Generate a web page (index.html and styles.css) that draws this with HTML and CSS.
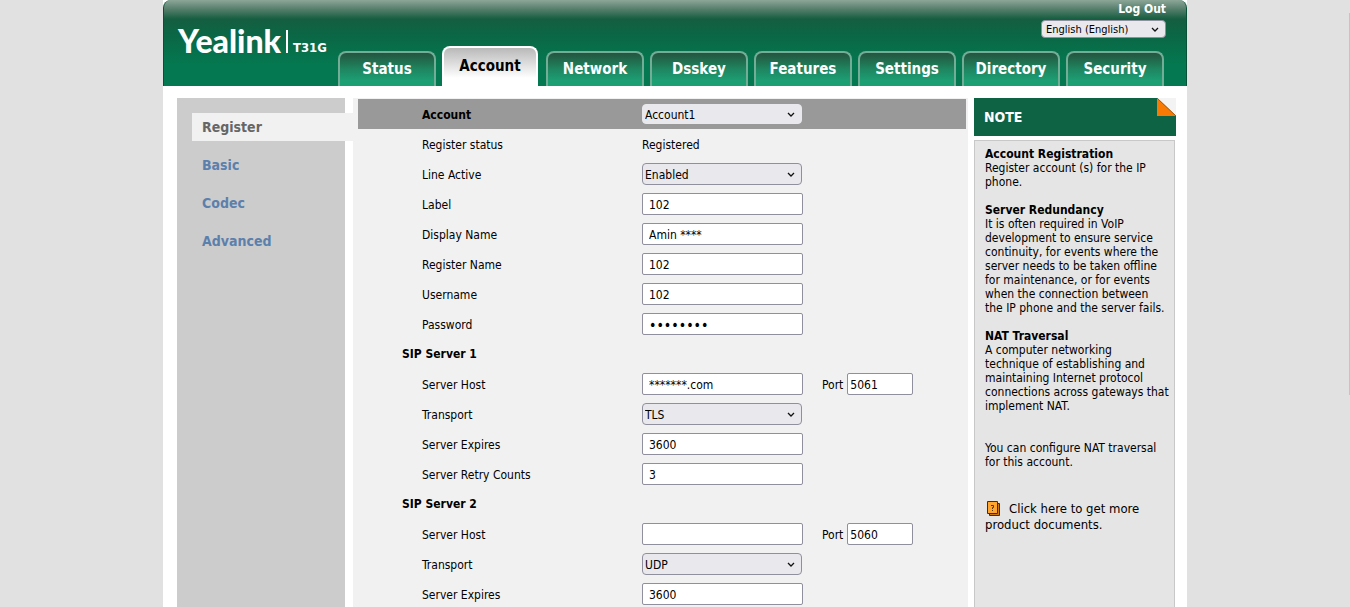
FILE: index.html
```html
<!DOCTYPE html>
<html lang="en">
<head>
<meta charset="utf-8">
<title>Yealink T31G - Account</title>
<link rel="stylesheet" href="styles.css">
</head>
<body>
<div class="page">
  <header class="header">
    <div class="brand"><span class="logo">Yealink</span><span class="model">T31G</span></div>
    <div class="header-right">
      <div class="tools">
        <a class="logout" href="#">Log Out</a>
        <span class="picker"><select class="language" aria-label="Language"><option>English (English)</option></select><svg class="arrow" viewBox="0 0 8 5"><path d="M1 1l3 3 3-3"/></svg></span>
      </div>
      <nav class="tabs" aria-label="Main">
        <a class="tab" href="#">Status</a>
        <a class="tab tab-active" href="#">Account</a>
        <a class="tab" href="#">Network</a>
        <a class="tab" href="#">Dsskey</a>
        <a class="tab" href="#">Features</a>
        <a class="tab" href="#">Settings</a>
        <a class="tab" href="#">Directory</a>
        <a class="tab" href="#">Security</a>
      </nav>
    </div>
  </header>
  <div class="content">
    <nav class="side" aria-label="Account">
      <a class="side-link side-active" href="#">Register</a>
      <a class="side-link" href="#">Basic</a>
      <a class="side-link" href="#">Codec</a>
      <a class="side-link" href="#">Advanced</a>
    </nav>
    <main class="main">
      <form class="form">
        <div class="row row-title"><label for="account">Account</label><span class="picker"><select class="select select-plain" id="account"><option>Account1</option></select><svg class="arrow" viewBox="0 0 8 5"><path d="M1 1l3 3 3-3"/></svg></span></div>
        <div class="row"><span class="text">Register status</span><span class="text">Registered</span></div>
        <div class="row"><label for="active">Line Active</label><span class="picker"><select class="select" id="active"><option>Enabled</option></select><svg class="arrow" viewBox="0 0 8 5"><path d="M1 1l3 3 3-3"/></svg></span></div>
        <div class="row"><label for="label">Label</label><input class="field" id="label" type="text" value="102"></div>
        <div class="row"><label for="display">Display Name</label><input class="field" id="display" type="text" value="Amin ****"></div>
        <div class="row"><label for="regname">Register Name</label><input class="field" id="regname" type="text" value="102"></div>
        <div class="row"><label for="user">Username</label><input class="field" id="user" type="text" value="102"></div>
        <div class="row"><label for="pass">Password</label><input class="field field-password" id="pass" type="password" value="password"></div>
        <h2 class="section">SIP Server 1</h2>
        <div class="row"><label for="host1">Server Host</label><input class="field" id="host1" type="text" value="*******.com"><span class="port"><label for="port1">Port</label><input class="field field-port" id="port1" type="text" value="5061"></span></div>
        <div class="row"><label for="transport1">Transport</label><span class="picker"><select class="select" id="transport1"><option>TLS</option></select><svg class="arrow" viewBox="0 0 8 5"><path d="M1 1l3 3 3-3"/></svg></span></div>
        <div class="row"><label for="expires1">Server Expires</label><input class="field" id="expires1" type="text" value="3600"></div>
        <div class="row"><label for="retry1">Server Retry Counts</label><input class="field" id="retry1" type="text" value="3"></div>
        <h2 class="section">SIP Server 2</h2>
        <div class="row"><label for="host2">Server Host</label><input class="field" id="host2" type="text" value=""><span class="port"><label for="port2">Port</label><input class="field field-port" id="port2" type="text" value="5060"></span></div>
        <div class="row"><label for="transport2">Transport</label><span class="picker"><select class="select" id="transport2"><option>UDP</option></select><svg class="arrow" viewBox="0 0 8 5"><path d="M1 1l3 3 3-3"/></svg></span></div>
        <div class="row"><label for="expires2">Server Expires</label><input class="field" id="expires2" type="text" value="3600"></div>
      </form>
    </main>
    <aside class="note">
      <h2 class="note-title">NOTE<svg class="fold" viewBox="0 0 19 18"><path fill="#f3f3f3" d="M0 0h19v18z"/><path fill="#f87a04" d="M0 0v18h19z"/><path stroke="#a85a10" d="M0 0l19 18"/></svg></h2>
      <div class="note-body">
        <h3>Account Registration</h3>
        <p>Register account (s) for the IP phone.</p>
        <h3>Server Redundancy</h3>
        <p>It is often required in VoIP development to ensure service continuity, for events where the server needs to be taken offline for maintenance, or for events when the connection between<br>the IP phone and the server fails.</p>
        <h3>NAT Traversal</h3>
        <p>A computer networking<br>technique of establishing and maintaining Internet protocol connections across gateways that implement NAT.</p>
        <p class="extra">You can configure NAT traversal for this account.</p>
        <a class="docs" href="#"><svg class="book" viewBox="0 0 14 15"><path fill="#c87818" stroke="#4a2c08" d="M2.500 2.500h10v12h-10z"/><path fill="#ffa530" stroke="#4a2c08" d="M.5.5h10v12H.5z"/><path fill="none" stroke="#5a3508" d="M4 4.500h2.500v2H5.500v1.500M5.500 9v1"/></svg>Click here to get more product documents.</a>
      </div>
    </aside>
  </div>
</div>
</body>
</html>
```
FILE: styles.css
```css
* { box-sizing: border-box; }
body {
  margin: 0;
  background: #e1e1e1;
  color: #000;
  font: 12px/14px "DejaVu Sans Condensed", "Noto Sans", sans-serif;
}
/* slim scroll indicator at the window's edge */
body::after {
  content: "";
  position: fixed;
  top: 13px;
  right: 0;
  width: 1px;
  height: 63vh;
  background: #c4c4c4;
}
a { color: inherit; text-decoration: none; }
h2, h3, p { margin: 0; font-size: inherit; }
.page {
  display: flex;
  flex-direction: column;
  max-width: 1024px;
  height: 100vh;
  margin: 0 auto;
  overflow: hidden;
  background: #fff;
}
.header {
  display: flex;
  flex: none;
  justify-content: space-between;
  height: 86px;
  padding: 0 20px 0 14px;
  border: solid #0a5038;
  border-width: 0 1px;
  border-radius: 8px 8px 0 0;
  background: linear-gradient(#8ca698, #567f6c 9px, #155e41 19px, #0b6645 34px, #047850 64px, #047850);
  color: #fff;
}
.brand { display: flex; align-items: flex-start; padding-top: 24px; }
.logo { font: 900 32px/34px Lato, sans-serif; }
.model {
  height: 23px;
  margin: 6px 0 0 5px;
  padding: 11px 0 0 5px;
  border-left: 2px solid #fff;
  font-size: 13px;
  font-weight: bold;
}
.header-right { display: flex; flex-direction: column; align-items: flex-end; justify-content: space-between; }
.tools { display: flex; flex-direction: column; align-items: flex-end; gap: 4px; padding-top: 2px; }
.logout { font-weight: bold; }
.tabs { display: flex; align-items: flex-end; gap: 6px; margin-right: 2px; }
.tab {
  width: 98px;
  height: 35px;
  padding-top: 7px;
  border: 2px solid #73ad98;
  border-bottom: 0;
  border-radius: 8px 8px 0 0;
  background: linear-gradient(#24543f, #1e8560 16px, #1d9f74 28px);
  font-size: 15px;
  font-weight: bold;
  line-height: 18px;
  text-align: center;
}
.tab-active {
  width: 96px;
  height: 40px;
  margin-right: 2px;
  padding-top: 9px;
  border-color: #fff;
  background: linear-gradient(#b9b9b9, #fff 30px);
  color: #000;
}
.content {
  display: grid;
  flex: 1;
  grid-template-columns: 168px minmax(0, 1fr) 202px;
  padding: 12px 11px 0 14px;
}
.side {
  display: flex;
  flex-direction: column;
  gap: 10px;
  padding: 15px 0 0 15px;
  background: #ccc;
  color: #5c80ac;
  font-size: 14px;
  font-weight: bold;
}
.side-link { padding: 6px 10px; line-height: 16px; }
.side-active { margin-right: -8px; background: #f1f1f1; color: #666; }
.main { margin: 0 6px 0 8px; padding: 1px 2px 0 5px; background: #f1f1f1; }
.row {
  display: grid;
  grid-template-columns: 220px 161px 1fr;
  align-items: center;
  height: 30px;
  padding-left: 64px;
}
.row label, .text { padding-top: 2px; }
.row-title { background: #999; font-weight: bold; }
.section { height: 30px; padding: 8px 0 0 44px; }
.field, .select, .language {
  margin: 0;
  border: 1px solid #8f8f9d;
  color: #000;
  font: 12px/14px "DejaVu Sans Condensed", "Noto Sans", sans-serif;
}
.field { width: 161px; height: 22px; padding: 2px 6px 0; border-radius: 2px; background: #fff; }
.field-password { font-size: 14px; }
.field-port { width: 66px; padding: 2px 2px 0; }
.port { display: flex; align-items: center; gap: 4px; padding-left: 19px; }
.picker { display: inline-grid; align-items: center; justify-self: start; }
.picker > * { grid-area: 1 / 1; }
.select, .language { appearance: none; border-radius: 4px; background: #e9e9ed; }
.select { width: 160px; height: 22px; padding: 2px 2px 0; }
.select-plain { height: 20px; border-color: #e9e9ed; }
.language { width: 125px; height: 18px; padding: 2px 4px 0; font-size: 11px; }
.arrow { justify-self: end; width: 8px; height: 5px; margin-right: 7px; fill: none; stroke: #111; stroke-width: 1.3; pointer-events: none; }
.note { display: flex; flex-direction: column; gap: 4px; }
.note-title {
  display: flex;
  justify-content: space-between;
  height: 38px;
  padding: 0 0 0 10px;
  background: #0e6344;
  color: #fff;
  font-size: 14px;
  line-height: 38px;
}
.fold { width: 19px; height: 18px; }
.note-body { flex: 1; margin-right: 1px; padding: 6px 2px 0 10px; border: 1px solid #c8c8c8; border-bottom: 0; background: #e5e5e5; }
.note-body p { margin-bottom: 14px; }
.note-body .extra { margin: 28px 0 32px; }
.docs { font-size: 13px; line-height: 16px; }
.book { width: 14px; height: 15px; margin: 0 8px 0 2px; vertical-align: -3px; }
```
